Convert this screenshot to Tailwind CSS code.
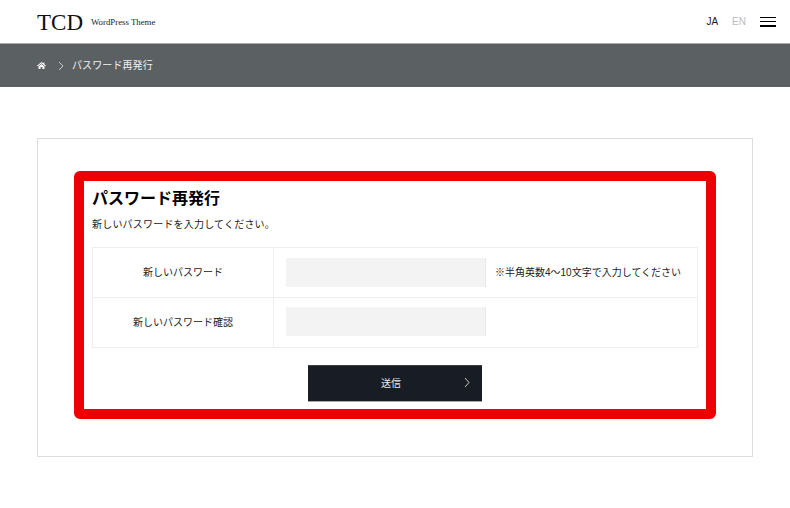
<!DOCTYPE html>
<html lang="ja">
<head>
<meta charset="utf-8">
<script src="https://cdn.jsdelivr.net/npm/@tailwindcss/browser@4"></script>
</head>
<body class="bg-white text-black font-['Liberation_Sans','Noto_Sans_CJK_JP',sans-serif] overflow-hidden">
<div class="w-[790px] h-[508px] overflow-hidden">
  <header class="h-[44px] border-b border-[#aaaaaa] flex items-center pl-[37px] pr-[14px]">
    <span class="font-['Liberation_Serif',serif] text-[23px] leading-none text-[#111111] mt-[1px]">TCD</span>
    <span class="font-['Liberation_Serif',serif] text-[8.8px] ml-[8px] mt-[3px] text-[#222222]">WordPress Theme</span>
    <span class="ml-auto text-[10px] text-[#222222]">JA</span>
    <span class="ml-[14px] text-[10px] text-[#bbbbbb]">EN</span>
    <div class="ml-[14px] w-4 flex flex-col gap-[3px] mt-[1px]">
      <div class="h-[1.5px] bg-black"></div>
      <div class="h-[1px] bg-black"></div>
      <div class="h-[2px] bg-black"></div>
    </div>
  </header>
  <nav class="h-[43px] bg-[#5b6063] flex items-center pl-[37px] text-white text-[10px]">
    <svg class="w-[9px] h-[9px]" viewBox="0 0 10 10" fill="#fff"><path d="M5 1 L0 5.4 L0.7 6.1 L5 2.4 L9.3 6.1 L10 5.4 L8.2 3.8 V1.6 H7 V2.8 Z"/><path d="M1.7 6 L5 3.2 L8.3 6 V9 H6 V6.8 H4 V9 H1.7 Z"/></svg>
    <svg class="w-[6px] h-[10px] ml-[12px]" viewBox="0 0 6 10" fill="none" stroke="#e5e5e5" stroke-width="0.8"><path d="M1 1 L5 5 L1 9"/></svg>
    <span class="ml-[8px] text-[#f2f2f2] tracking-[0.1px]">パスワード再発行</span>
  </nav>
  <main class="mt-[51px] mx-[37px] w-[716px] h-[319px] border border-[#dddddd] pt-[32px] pl-[36px]">
    <div class="w-[642px] h-[248px] border-[10px] border-[#ef0000] rounded-[6px] px-[8px]">
      <h1 class="mt-[7px] h-[22px] text-[16px] leading-[22px] font-bold text-black">パスワード再発行</h1>
      <p class="mt-[7px] h-[16px] text-[10px] leading-[16px] text-[#222222] tracking-[0.2px]">新しいパスワードを入力してください。</p>
      <div class="mt-[14px] w-[606px] border border-[#eeeeee] text-[10px] text-[#222222]">
        <div class="flex h-[50px] border-b border-[#eeeeee]">
          <div class="w-[181px] border-r border-[#eeeeee] flex items-center justify-center">新しいパスワード</div>
          <div class="flex items-center pl-[12px]">
            <div class="w-[200px] h-[29px] bg-[#f3f3f3] border-r border-[#e8e8e8]"></div>
            <span class="ml-[9px]">※半角英数4〜10文字で入力してください</span>
          </div>
        </div>
        <div class="flex h-[49px]">
          <div class="w-[181px] border-r border-[#eeeeee] flex items-center justify-center pb-[1px]">新しいパスワード確認</div>
          <div class="flex items-center pl-[12px] pb-[2px]">
            <div class="w-[200px] h-[29px] bg-[#f3f3f3] border-r border-[#e8e8e8]"></div>
          </div>
        </div>
      </div>
      <div class="mt-[17px] ml-[216px] w-[174px] h-[37px] bg-[#181d24] border-t border-t-[#3c3f44] border-b border-b-[#a8a9ab] relative flex items-center justify-center text-[10px] text-[#eeeeee] pr-[8px]">
        送信
        <svg class="absolute right-[12px] top-[11px] w-[6px] h-[11px]" viewBox="0 0 6 11" fill="none" stroke="#dddddd" stroke-width="0.9"><path d="M1 1 L5 5.5 L1 10"/></svg>
      </div>
    </div>
  </main>
</div>
</body>
</html>
